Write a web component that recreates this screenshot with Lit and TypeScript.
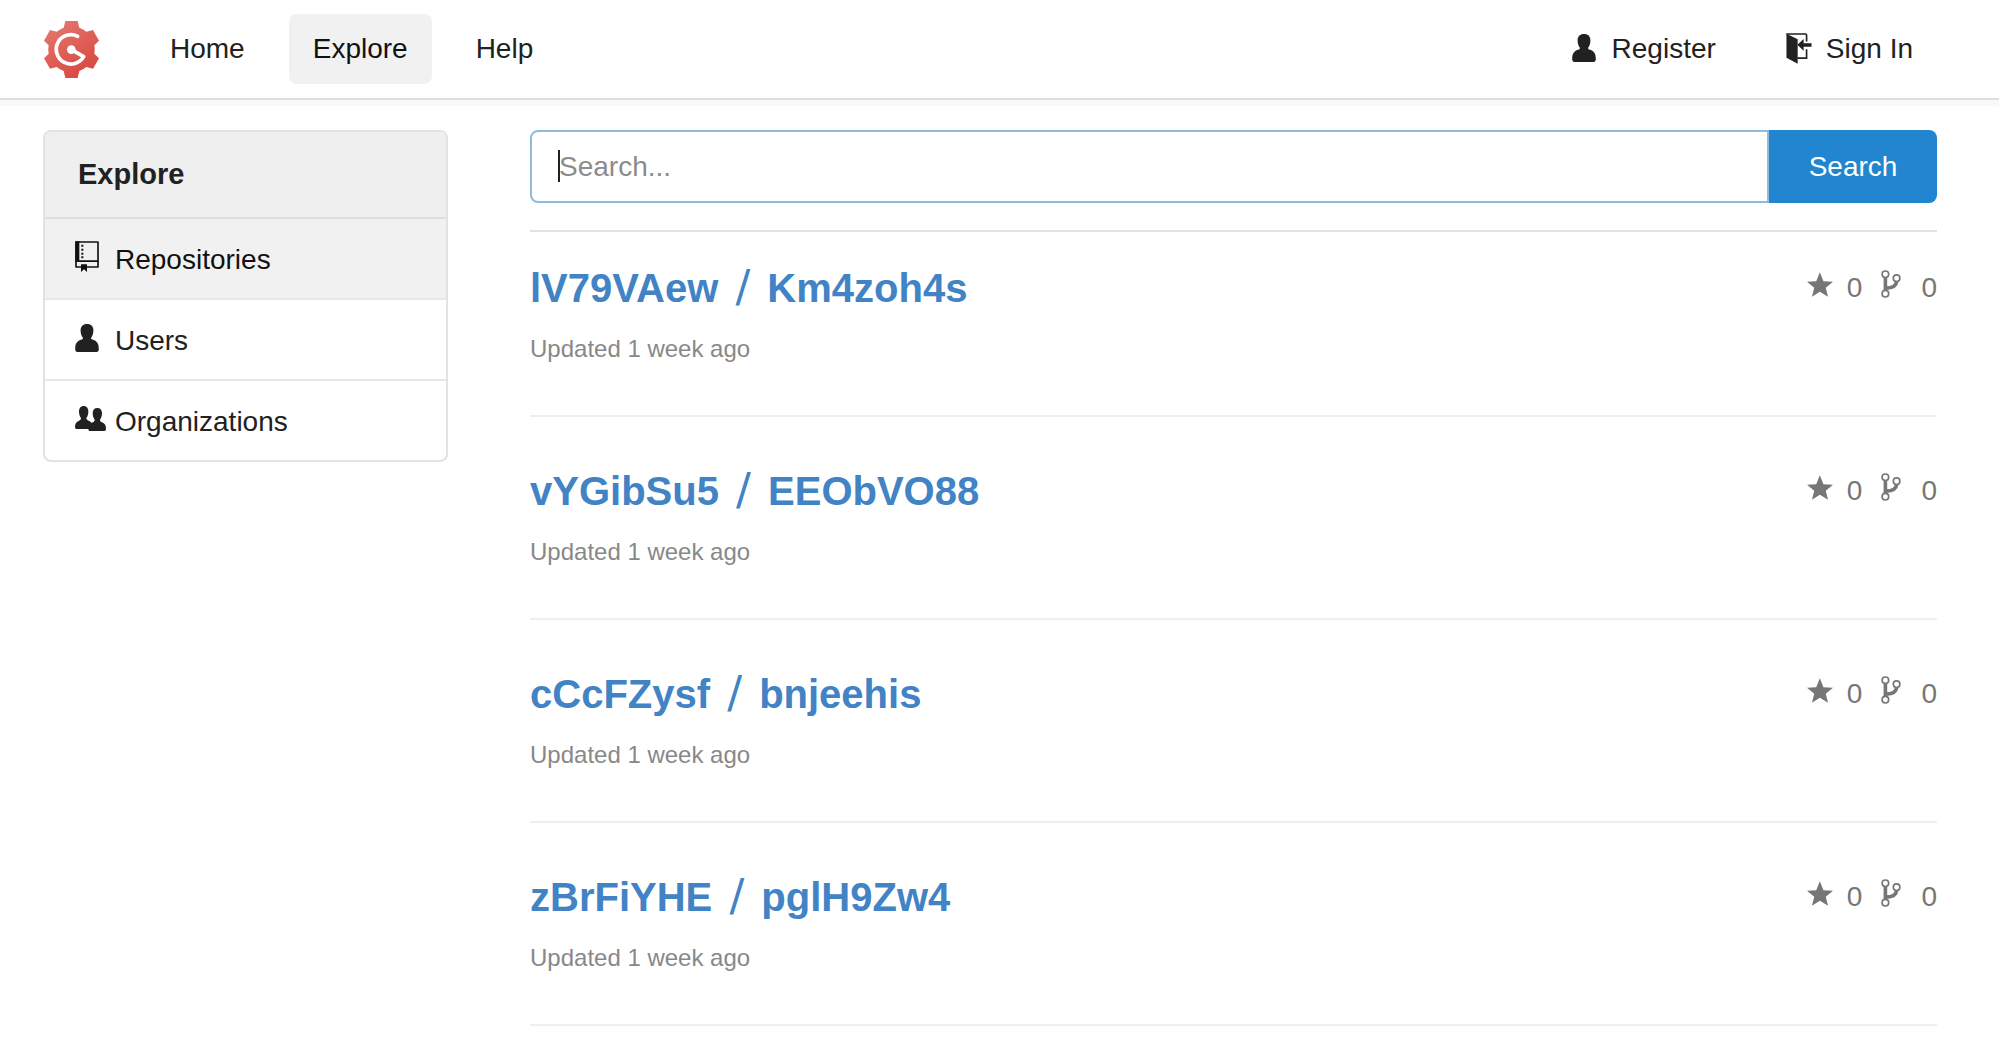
import { LitElement, html, css, svg } from "lit";
import { customElement, property } from "lit/decorators.js";

const PERSON =
  "M128 104C141 104 147 112 147 123C147 134 143 141 140 145C140 149 142 150 146 151C158 155 163 163 163 178Q163 187 156 187H100Q93 187 93 178C93 163 98 155 110 151C114 150 116 149 116 145C113 141 109 134 109 123C109 112 116 104 128 104Z";

const ICONS: Record<string, { w: number; h: number; box: string; art: unknown }> = {
  person: { w: 24, h: 28, box: "93 104 70 83", art: svg`<path d=${PERSON} />` },
  signIn: {
    w: 26,
    h: 31,
    box: "742 97 78 94",
    art: svg`
      <path d="M743 99L777 116V190L743 172Z" />
      <path d="M745 102V100H801Q804 100 804 104V123M776 173H804V146" fill="none" stroke="currentColor" stroke-width="5" />
      <path d="M776 133L795 115V128H819V139H795V151Z" />`,
  },
  repo: {
    w: 24,
    h: 31,
    box: "135 365 72 93",
    art: svg`
      <path d="M138 368H204V443H138Z" fill="none" stroke="currentColor" stroke-width="5" stroke-linejoin="round" />
      <path d="M136 366H148V428H136ZM137 423H205V428H137Z" />
      <path d="M154 376h6v6h-6zM154 388h6v6h-6zM154 400h6v6h-6zM154 411h6v6h-6z" />
      <path d="M153 435H171V458L162 450L153 458Z" />`,
  },
  organization: {
    w: 31,
    h: 25,
    box: "136 858 93 75",
    art: svg`
      <path d="M162 858C171 858 176 865 176 875C176 884 173 890 170 894C170 898 173 900 177 902C182 904 186 908 188 912V933H178L176 927H140Q136 927 136 921C136 910 140 905 148 902C152 900 154 898 154 894C151 890 148 884 148 875C148 865 153 858 162 858Z" />
      <path d="M203 864C212 864 217 870 217 880C217 889 214 895 211 899C211 903 213 905 217 907C225 910 229 916 229 926Q229 933 224 933H182Q177 933 177 926C177 916 182 910 189 907C193 905 195 903 195 899C192 895 189 889 189 880C189 870 194 864 203 864Z" />`,
  },
  star: {
    w: 26,
    h: 25,
    box: "80 65 79 74",
    art: svg`<path d="M119 65L130 92L159 94L137 112L144 139L119 124L95 139L102 112L80 94L108 92Z" />`,
  },
  branch: {
    w: 20,
    h: 28,
    box: "302 63 60 85",
    art: svg`
      <path d="M315 86V124M349 98C348 113 334 117 317 118" fill="none" stroke="currentColor" stroke-width="11" />
      <g fill="#fff" stroke="currentColor" stroke-width="5">
        <circle cx="315" cy="76" r="10" /><circle cx="349" cy="88" r="10" /><circle cx="315" cy="135" r="10" />
      </g>`,
  },
};

const icon = (name: string) => {
  const i = ICONS[name];
  return html`<svg width=${i.w} height=${i.h} viewBox=${i.box} fill="currentColor" aria-hidden="true">${i.art}</svg>`;
};

const base = css`
  * { box-sizing: border-box; }
  :host {
    display: block;
    font-family: "Liberation Sans", Arial, sans-serif;
    font-size: 28px;
    color: #212121;
  }
  a { color: inherit; text-decoration: none; }
  svg { display: block; flex: none; }
`;

@customElement("site-header")
class SiteHeader extends LitElement {
  static styles = [base, css`
    .bar {
      display: flex;
      align-items: center;
      height: 100px;
      padding: 0 62px 0 44px;
      border-bottom: 2px solid #dedede;
      box-shadow: 0 6px 0 #f9f9f9;
      background: #fff;
    }
    .logo { margin-right: 47px; }
    .nav { display: flex; gap: 20px; }
    .account { margin-left: auto; gap: 22px; }
    .link {
      display: flex;
      align-items: center;
      height: 70px;
      padding: 0 24px;
      border-radius: 8px;
    }
    .active { background: #f1f1f1; color: #111; }
    .slot { width: 40px; padding-bottom: 2px; }
  `];

  render() {
    return html`
      <header class="bar">
        <a class="logo" href="#" aria-label="Dashboard">
          <svg width="55" height="57" viewBox="72 60 165 171" aria-hidden="true">
            <defs>
              <linearGradient id="coral" x1="0.2" y1="0" x2="0.8" y2="1">
                <stop offset="0" stop-color="#e4786f" />
                <stop offset="1" stop-color="#d8453d" />
              </linearGradient>
            </defs>
            <path fill="url(#coral)" d="M136 60H173L178 80Q190 84 199 92L219 87L237 119L223 133Q226 146 223 158L237 172L219 203L199 198Q190 206 178 210L173 231H136L131 210Q120 206 110 198L90 203L72 172L86 158Q83 146 86 133L72 119L90 87L110 92Q120 84 131 80Z" />
            <path d="M173 106A44 44 0 1 0 191 167L154 146" fill="none" stroke="#fff" stroke-width="11" stroke-linecap="round" stroke-linejoin="round" />
            <circle cx="154" cy="146" r="13" fill="#fff" />
          </svg>
        </a>
        <nav class="nav">
          <a class="link" href="#">Home</a>
          <a class="link active" href="#">Explore</a>
          <a class="link" href="#">Help</a>
        </nav>
        <nav class="nav account">
          <a class="link" href="#"><span class="slot">${icon("person")}</span>Register</a>
          <a class="link" href="#"><span class="slot">${icon("signIn")}</span>Sign In</a>
        </nav>
      </header>
    `;
  }
}

@customElement("explore-menu")
class ExploreMenu extends LitElement {
  static styles = [base, css`
    .menu {
      border: 2px solid #e2e2e2;
      border-radius: 8px;
      overflow: hidden;
    }
    .title {
      margin: 0;
      padding: 0 33px;
      font-size: 29px;
      line-height: 85px;
      background: #efefef;
    }
    .item {
      display: flex;
      align-items: center;
      height: 81px;
      padding: 2px 30px 0;
      border-top: 2px solid #e8e8e8;
    }
    .title + .item { border-top-color: #dedede; }
    .active { background: #f1f1f1; color: #111; }
    .slot { width: 40px; padding-bottom: 6px; }
  `];

  render() {
    return html`
      <nav class="menu">
        <h2 class="title">Explore</h2>
        <a class="item active" href="#"><span class="slot">${icon("repo")}</span>Repositories</a>
        <a class="item" href="#"><span class="slot">${icon("person")}</span>Users</a>
        <a class="item" href="#"><span class="slot">${icon("organization")}</span>Organizations</a>
      </nav>
    `;
  }
}

@customElement("search-form")
class SearchForm extends LitElement {
  static styles = [base, css`
    .form { display: flex; height: 73px; }
    .field { position: relative; flex: 1; display: flex; min-width: 0; }
    .input {
      flex: 1;
      min-width: 0;
      padding: 0 27px;
      border: 2px solid #8fbcdd;
      border-radius: 8px 0 0 8px;
      outline: none;
      font: inherit;
      color: inherit;
      background: #fff;
    }
    .input::placeholder { color: #8c8c8c; opacity: 1; }
    .caret { position: absolute; left: 28px; top: 20px; width: 2px; height: 32px; background: #212121; }
    .submit {
      width: 168px;
      padding: 0;
      border: 0;
      border-radius: 0 8px 8px 0;
      font: inherit;
      color: #fff;
      background: #2185d0;
    }
  `];

  render() {
    return html`
      <form class="form" @submit=${(e: Event) => e.preventDefault()}>
        <div class="field">
          <input class="input" type="text" name="q" aria-label="Search" placeholder="Search..." />
          <span class="caret"></span>
        </div>
        <button class="submit" type="submit">Search</button>
      </form>
    `;
  }
}

@customElement("repo-item")
class RepoItem extends LitElement {
  @property() owner = "";
  @property() name = "";

  static styles = [base, css`
    .head { display: flex; justify-content: space-between; align-items: flex-start; }
    .title { margin: 0; font-size: 40px; line-height: 48px; color: #4183c4; }
    .slash {
      margin: 0 6px;
      font-family: "DejaVu Sans", sans-serif;
      font-size: 44px;
      font-weight: 400;
      line-height: 1;
    }
    .stats { display: flex; gap: 19px; line-height: 48px; color: #767676; }
    .stat { display: flex; align-items: center; }
    .slot { width: 40px; padding-bottom: 8px; }
    .time { margin: 21px 0 0; font-size: 24px; line-height: 32px; color: #888; }
  `];

  render() {
    return html`
      <div class="head">
        <h3 class="title"><a href="#">${this.owner} <span class="slash">/</span> ${this.name}</a></h3>
        <div class="stats">
          <span class="stat"><span class="slot">${icon("star")}</span>0</span>
          <span class="stat"><span class="slot">${icon("branch")}</span>0</span>
        </div>
      </div>
      <p class="time">Updated 1 week ago</p>
    `;
  }
}

@customElement("app-root")
class AppRoot extends LitElement {
  private repos = [
    ["lV79VAew", "Km4zoh4s"],
    ["vYGibSu5", "EEObVO88"],
    ["cCcFZysf", "bnjeehis"],
    ["zBrFiYHE", "pglH9Zw4"],
  ];

  static styles = [base, css`
    :host { background: #fff; }
    .page {
      display: grid;
      grid-template-columns: 405px minmax(0, 1fr);
      align-items: start;
      gap: 82px;
      padding: 30px 62px 0 43px;
    }
    .list { margin-top: 27px; border-top: 2px solid #e2e2e2; }
    .row { padding: 50px 0; border-bottom: 2px solid #efefef; }
    .row:first-child { padding-top: 32px; }
  `];

  render() {
    return html`
      <site-header></site-header>
      <main class="page">
        <explore-menu></explore-menu>
        <section>
          <search-form></search-form>
          <div class="list">
            ${this.repos.map(
              ([owner, name]) => html`<div class="row"><repo-item .owner=${owner} .name=${name}></repo-item></div>`,
            )}
          </div>
        </section>
      </main>
    `;
  }
}
